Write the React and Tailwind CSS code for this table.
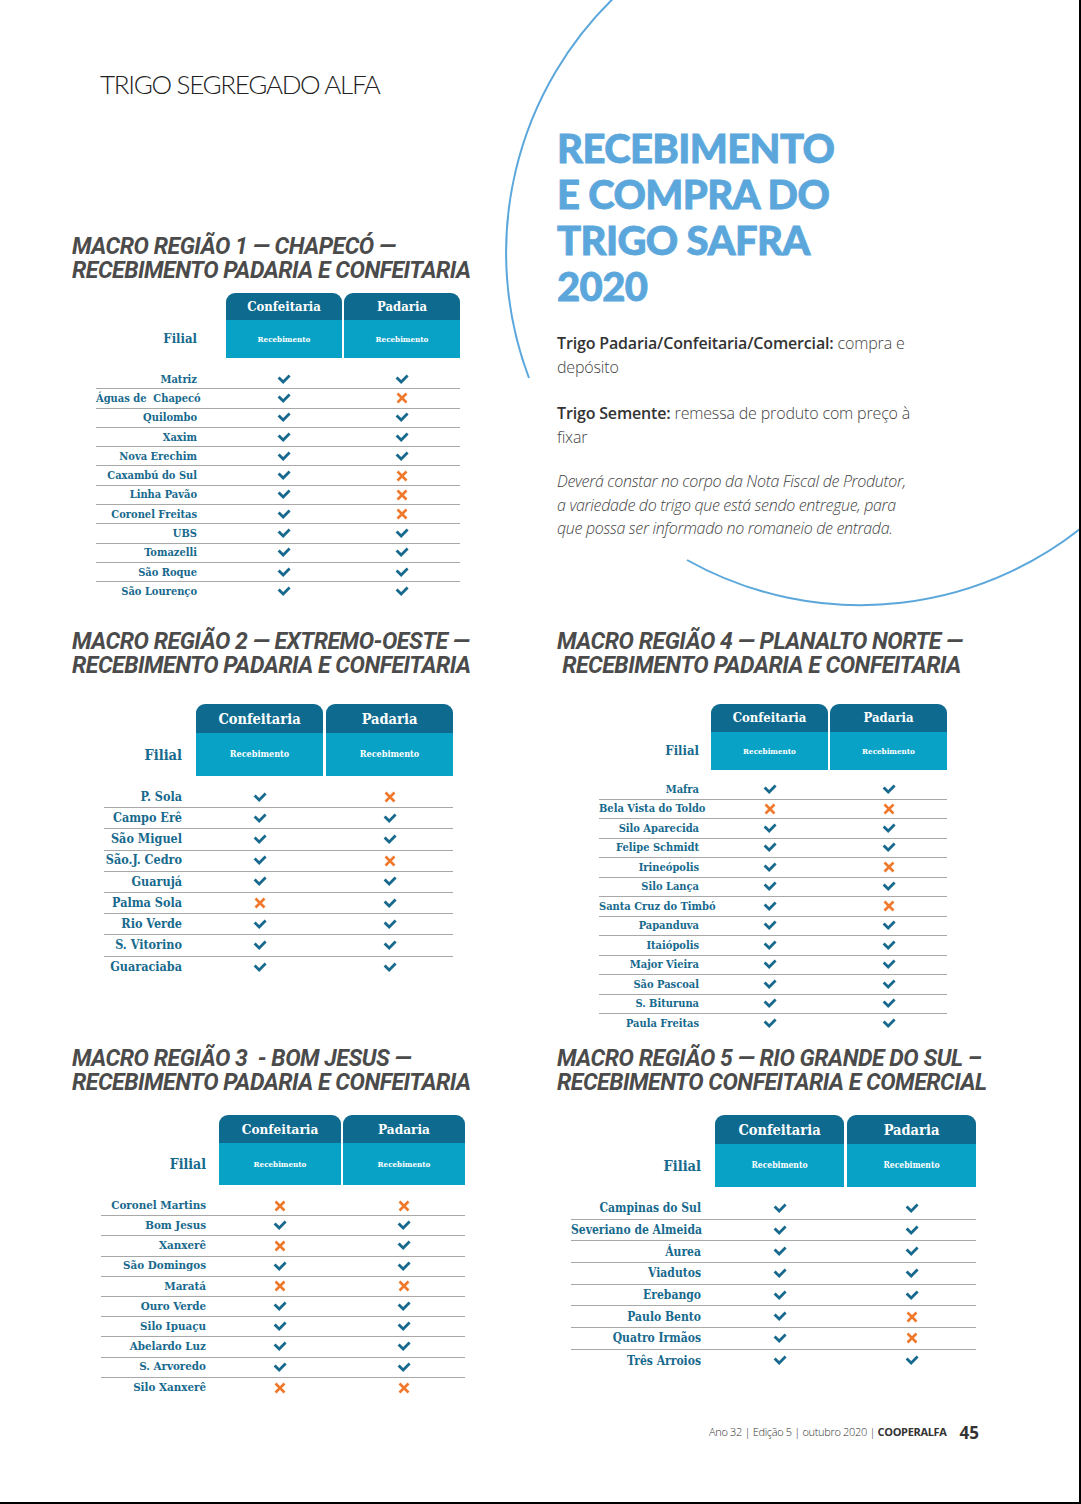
import React from 'react';

// shared fonts
const slab = "font-['DejaVu_Serif_Condensed','DejaVu_Serif',serif] font-bold";
const headFont = "font-['Liberation_Sans_Narrow','Roboto',sans-serif] font-bold italic";

function Mark({ ok }) {
  if (ok) {
    return (
      <svg width="14" height="11" viewBox="0 0 14 11" className="block">
        <path d="M1.6 3.4 L6.2 8 L12.6 1.6" fill="none" stroke="#17698d" strokeWidth="2.8" />
      </svg>
    );
  }
  return (
    <svg width="12" height="12" viewBox="0 0 12 12" className="block">
      <path d="M1.5 1.5 L10.5 10.5 M10.5 1.5 L1.5 10.5" fill="none" stroke="#f0782b" strokeWidth="2.6" />
    </svg>
  );
}

function Table({ t, rows }) {
  return (
    <div className={`w-fit ${t.wrap}`}>
      {/* header: Filial + two tabs */}
      <div className="flex">
        <div className={`${t.nameW} flex flex-col`}>
          <div className={t.topH} />
          <div className={`${t.botH} flex items-center justify-end ${slab} ${t.filial} text-[#17698d]`}>Filial</div>
        </div>
        <div className={t.spacer} />
        {['Confeitaria', 'Padaria'].map((label, i) => (
          <React.Fragment key={label}>
            {i === 1 && <div className={t.gap} />}
            <div className={`${t.colW} rounded-t-[9px] overflow-hidden`}>
              <div className={`${t.topH} bg-[#0e6a8e] flex items-center justify-center text-white ${slab} ${t.head}`}>{label}</div>
              <div className={`${t.botH} bg-[#08a2c6] flex items-center justify-center text-white ${slab} ${t.sub}`}>Recebimento</div>
            </div>
          </React.Fragment>
        ))}
      </div>

      {/* rows */}
      <div className={t.first}>
        {rows.map(([name, a, b], i) => (
          <div
            key={name}
            className={`flex items-center ${t.rowH} ${i < rows.length - 1 ? 'border-b border-[#a8a8a8]' : ''}`}
          >
            <div className={`${t.nameW} text-right whitespace-pre ${slab} ${t.name} text-[#17698d] leading-none`}>{name}</div>
            <div className={t.spacer} />
            <div className={`${t.colW} flex justify-center`}><Mark ok={a} /></div>
            <div className={t.gap} />
            <div className={`${t.colW} flex justify-center`}><Mark ok={b} /></div>
          </div>
        ))}
      </div>
    </div>
  );
}

function Heading({ children, className = '' }) {
  return (
    <h2 className={`${headFont} text-[23px] leading-[24px] tracking-[-0.02em] text-[#4b4b4b] whitespace-pre ${className}`}>
      {children}
    </h2>
  );
}

const t1 = {
  wrap: 'ml-[24px] mt-[10px]', nameW: 'w-[101px]', spacer: 'w-[29px]', colW: 'w-[116px]', gap: 'w-[2px]',
  topH: 'h-[27px]', botH: 'h-[38px]', head: 'text-[13px]', sub: 'text-[8px]', filial: 'text-[13px]',
  name: 'text-[11px]', rowH: 'h-[19.3px]', first: 'mt-[12px]',
};
const t2 = {
  wrap: 'ml-[32px] mt-[26px]', nameW: 'w-[78px]', spacer: 'w-[14px]', colW: 'w-[127px]', gap: 'w-[3px]',
  topH: 'h-[29px]', botH: 'h-[43px]', head: 'text-[14.5px]', sub: 'text-[9px]', filial: 'text-[14.5px]',
  name: 'text-[12.5px]', rowH: 'h-[21.2px]', first: 'mt-[11px]',
};
const t4 = {
  wrap: 'ml-[42px] mt-[26px]', nameW: 'w-[100px]', spacer: 'w-[12px]', colW: 'w-[117px]', gap: 'w-[2px]',
  topH: 'h-[28px]', botH: 'h-[38px]', head: 'text-[13px]', sub: 'text-[8px]', filial: 'text-[13px]',
  name: 'text-[11px]', rowH: 'h-[19.5px]', first: 'mt-[10px]',
};
const t3 = {
  wrap: 'ml-[29px] mt-[20px]', nameW: 'w-[105px]', spacer: 'w-[13px]', colW: 'w-[122px]', gap: 'w-[2px]',
  topH: 'h-[28px]', botH: 'h-[42px]', head: 'text-[13.5px]', sub: 'text-[8px]', filial: 'text-[14px]',
  name: 'text-[11.5px]', rowH: 'h-[20.2px]', first: 'mt-[11px]',
};
const t5 = {
  wrap: 'ml-[14px] mt-[20px]', nameW: 'w-[130px]', spacer: 'w-[14px]', colW: 'w-[129px]', gap: 'w-[3px]',
  topH: 'h-[29px]', botH: 'h-[43px]', head: 'text-[14.5px]', sub: 'text-[8.5px]', filial: 'text-[14.5px]',
  name: 'text-[12px]', rowH: 'h-[21.7px]', first: 'mt-[11px]',
};

const Y = true;
const N = false;

const rows1 = [
  ['Matriz', Y, Y], ['Águas de  Chapecó', Y, N], ['Quilombo', Y, Y], ['Xaxim', Y, Y],
  ['Nova Erechim', Y, Y], ['Caxambú do Sul', Y, N], ['Linha Pavão', Y, N], ['Coronel Freitas', Y, N],
  ['UBS', Y, Y], ['Tomazelli', Y, Y], ['São Roque', Y, Y], ['São Lourenço', Y, Y],
];
const rows2 = [
  ['P. Sola', Y, N], ['Campo Erê', Y, Y], ['São Miguel', Y, Y], ['São.J. Cedro', Y, N],
  ['Guarujá', Y, Y], ['Palma Sola', N, Y], ['Rio Verde', Y, Y], ['S. Vitorino', Y, Y], ['Guaraciaba', Y, Y],
];
const rows4 = [
  ['Mafra', Y, Y], ['Bela Vista do Toldo', N, N], ['Silo Aparecida', Y, Y], ['Felipe Schmidt', Y, Y],
  ['Irineópolis', Y, N], ['Silo Lança', Y, Y], ['Santa Cruz do Timbó', Y, N], ['Papanduva', Y, Y],
  ['Itaiópolis', Y, Y], ['Major Vieira', Y, Y], ['São Pascoal', Y, Y], ['S. Bituruna', Y, Y], ['Paula Freitas', Y, Y],
];
const rows3 = [
  ['Coronel Martins', N, N], ['Bom Jesus', Y, Y], ['Xanxerê', N, Y], ['São Domingos', Y, Y],
  ['Maratá', N, N], ['Ouro Verde', Y, Y], ['Silo Ipuaçu', Y, Y], ['Abelardo Luz', Y, Y],
  ['S. Arvoredo', Y, Y], ['Silo Xanxerê', N, N],
];
const rows5 = [
  ['Campinas do Sul', Y, Y], ['Severiano de Almeida', Y, Y], ['Áurea', Y, Y], ['Viadutos', Y, Y],
  ['Erebango', Y, Y], ['Paulo Bento', Y, N], ['Quatro Irmãos', Y, N], ['Três Arroios', Y, Y],
];

export default function App() {
  return (
    <div className="relative w-[1081px] h-[1504px] overflow-hidden bg-white border-r-2 border-b-2 border-black pt-[67px] pl-[72px]">
      {/* decorative circle line */}
      <svg className="absolute left-0 top-0 pointer-events-none" width="1081" height="1504" viewBox="0 0 1081 1504">
        <path d="M 620 -8 A 355 355 0 0 0 529 378" fill="none" stroke="#5ba7dc" strokeWidth="2" />
        <path d="M 687 560 A 355 355 0 0 0 1100 512" fill="none" stroke="#5ba7dc" strokeWidth="2" />
      </svg>

      {/* row 1 */}
      <div className="relative grid grid-cols-[485px_1fr] h-[563px]">
        <div>
          <p className="ml-[28px] font-['Lato',sans-serif] font-light text-[26px] leading-[34px] tracking-[-0.05em] text-[#222]">
            TRIGO SEGREGADO ALFA
          </p>
          <Heading className="mt-[134px]">{'MACRO REGIÃO 1 — CHAPECÓ —\nRECEBIMENTO PADARIA E CONFEITARIA'}</Heading>
          <Table t={t1} rows={rows1} />
        </div>
        <div className="font-['Open_Sans',sans-serif] text-[#444]">
          <h1 className="mt-[58px] font-['Lato',sans-serif] font-black text-[40px] leading-[46px] tracking-[-0.015em] text-[#5ba7dc] [-webkit-text-stroke:0.8px_#5ba7dc]">
            RECEBIMENTO<br />E COMPRA DO<br />TRIGO SAFRA<br />2020
          </h1>
          <p className="mt-[22px] w-[358px] text-[16px] leading-[24px] font-light tracking-[-0.01em]">
            <span className="font-semibold text-[#333]">Trigo Padaria/Confeitaria/Comercial:</span> compra e depósito
          </p>
          <p className="mt-[22px] w-[358px] text-[16px] leading-[24px] font-light tracking-[-0.01em]">
            <span className="font-semibold text-[#333]">Trigo Semente:</span> remessa de produto com preço à fixar
          </p>
          <p className="mt-[21px] w-[358px] text-[16px] leading-[23.5px] font-light italic tracking-[-0.02em]">
            Deverá constar no corpo da Nota Fiscal de Produtor, a variedade do trigo que está sendo entregue, para que possa ser informado no romaneio de entrada.
          </p>
        </div>
      </div>

      {/* row 2 */}
      <div className="relative grid grid-cols-[485px_1fr] h-[417px]">
        <div>
          <Heading>{'MACRO REGIÃO 2 — EXTREMO-OESTE —\nRECEBIMENTO PADARIA E CONFEITARIA'}</Heading>
          <Table t={t2} rows={rows2} />
        </div>
        <div>
          <Heading>{'MACRO REGIÃO 4 — PLANALTO NORTE —\n RECEBIMENTO PADARIA E CONFEITARIA'}</Heading>
          <Table t={t4} rows={rows4} />
        </div>
      </div>

      {/* row 3 */}
      <div className="relative grid grid-cols-[485px_1fr] h-[370px]">
        <div>
          <Heading>{'MACRO REGIÃO 3  - BOM JESUS —\nRECEBIMENTO PADARIA E CONFEITARIA'}</Heading>
          <Table t={t3} rows={rows3} />
        </div>
        <div>
          <Heading>{'MACRO REGIÃO 5 — RIO GRANDE DO SUL –\nRECEBIMENTO CONFEITARIA E COMERCIAL'}</Heading>
          <Table t={t5} rows={rows5} />
        </div>
      </div>

      {/* footer */}
      <div className="relative h-[30px] flex items-center justify-end pr-[100px] gap-[13px] font-['Open_Sans',sans-serif] text-[#333]">
        <span className="text-[11px] font-light tracking-[-0.03em]">
          Ano 32 | Edição 5 | outubro 2020 | <span className="font-bold">COOPERALFA</span>
        </span>
        <span className="text-[17px] font-bold leading-none">45</span>
      </div>
    </div>
  );
}
